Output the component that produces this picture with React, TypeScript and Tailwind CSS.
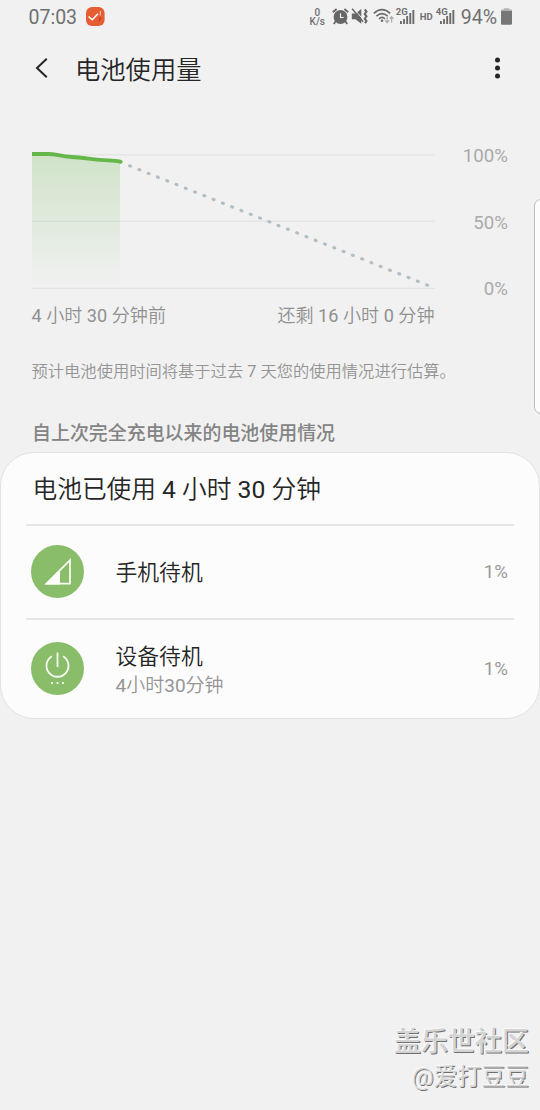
import type { ReactNode } from "react";

const SignalBars = () => (
  <svg width="15" height="14" viewBox="0 0 15 14" fill="#6b6b6b">
    <rect x="0" y="11" width="1.9" height="3" />
    <rect x="3.1" y="9" width="1.9" height="5" />
    <rect x="6.2" y="6" width="1.9" height="8" />
    <rect x="9.3" y="3" width="1.9" height="11" />
    <rect x="12.4" y="0" width="1.9" height="14" />
  </svg>
);

// digits look too thin next to the Chinese glyphs at weight 350
const Num = ({ children }: { children: ReactNode }) => <span className="font-normal">{children}</span>;

const StatusBar = () => (
  <header className="flex h-[34px] items-center pl-[28.5px] pr-7 text-[19.5px] text-[#707070]">
    <span className="pt-px">07:03</span>
    <svg className="ml-[9px] -mt-[2px]" width="19" height="19" viewBox="0 0 19 19">
      <rect width="18.6" height="19" rx="6" fill="#e65c33" />
      <path d="M2.6 9.6l3.7 3.2 5.7-6" fill="none" stroke="#fff" strokeWidth="1.5" />
      <path d="M14.3 4v4.5" stroke="#fbd0c0" strokeWidth="1" />
      <path d="M13 11q1.8-.8 1.6.6l-1 1v1.4" fill="none" stroke="#b52c10" strokeWidth=".9" />
    </svg>

    <div className="ml-auto flex items-center">
      <div className="flex w-[17px] flex-col items-center text-[10px] font-medium leading-[9.5px]">
        <span>0</span>
        <span>K/s</span>
      </div>
      <svg className="ml-1.5 -mt-[2px]" width="17" height="17" viewBox="0 0 17 17">
        <circle cx="8.5" cy="9" r="6.9" fill="#666" />
        <path d="M.8 4.2L4.6 1M16.2 4.2L12.4 1M3.7 13.3L1.8 16M13.3 13.3l1.9 2.7" stroke="#666" strokeWidth="1.8" />
        <path d="M8.5 5.2v4.3h3.2" fill="none" stroke="#f1f1f1" strokeWidth="1.2" />
      </svg>
      <svg className="ml-[2px] -mt-[2px]" width="17" height="17" viewBox="0 0 17 17">
        <path d="M.8 5.5h3.7L10.3 1v14.8l-5.8-4.5H.8z" fill="#666" />
        <path d="M3.2 1.2l9.5 10.8" stroke="#f1f1f1" strokeWidth="1" />
        <path d="M1.1.8l11 13" stroke="#666" strokeWidth="1.4" />
        <path d="M13.7 1.5l1.8 2-1.8 2.4 1.8 2.4-1.8 2.4 1.8 2.4-1.5 2" fill="none" stroke="#666" strokeWidth="2" />
      </svg>
      <svg className="ml-[5px] -mt-[3px]" width="22" height="18" viewBox="0 0 22 18">
        <g fill="none" stroke="#6b6b6b" strokeWidth="1.6">
          <path d="M.8 6.3q8.2-7.2 16.4 0" />
          <path d="M3.4 9.1q5.6-4.9 11.2 0" />
          <path d="M6 11.8q3-2.7 6 0" />
        </g>
        <circle cx="9" cy="13.8" r="1.3" fill="#6b6b6b" />
        <path d="M14.2 9.5v6M12.2 13.4l2 2.2 2-2.2M18.6 15.6v-6M16.7 11.8l1.9-2.2 1.9 2.2" fill="none" stroke="#aaa" strokeWidth="1.2" />
      </svg>
      <div className="relative ml-1.5 h-4 w-[15px]">
        <span className="absolute -left-[5px] -top-[2px] text-[9.5px] font-bold leading-[10px]">2G</span>
        <div className="absolute -left-px top-px">
          <SignalBars />
        </div>
      </div>
      <span className="ml-[4px] w-[16px] pb-px text-[9.5px] font-bold leading-none">HD</span>
      <div className="relative ml-1 h-4 w-[15px]">
        <span className="absolute -left-[4px] -top-[2px] text-[9.5px] font-bold leading-[10px]">4G</span>
        <div className="absolute left-0 top-px">
          <SignalBars />
        </div>
      </div>
      <span className="ml-[6px] pt-px">94%</span>
      <svg className="ml-1 -mt-[2px]" width="11" height="17" viewBox="0 0 11 17">
        <rect x="2.7" y="0" width="5.6" height="3" fill="#c4c4c4" />
        <rect x="0" y="1.8" width="11" height="15" rx="1.2" fill="#777" />
        <rect x="0" y="1.8" width="11" height="1.2" fill="#b5b5b5" />
      </svg>
    </div>
  </header>
);

const TitleBar = () => (
  <div className="flex h-[70px] items-center pl-[35px] pr-[38px] text-[#252525]">
    <svg className="-mt-[2px]" width="13" height="20" viewBox="0 0 13 20" fill="none" stroke="#252525" strokeWidth="2">
      <path d="M11.8.8L2 10l9.8 9.2" />
    </svg>
    <h1 className="ml-[27px] pt-[3px] text-[25.3px] font-[350] leading-none">电池使用量</h1>
    <svg className="ml-auto -mt-[2px]" width="9" height="22" viewBox="0 0 9 22" fill="#252525">
      <circle cx="4.5" cy="3" r="2.5" />
      <circle cx="4.5" cy="11" r="2.5" />
      <circle cx="4.5" cy="19" r="2.5" />
    </svg>
  </div>
);

const BatteryChart = () => (
  <section className="pl-[31.5px] pr-8 pt-[42px] font-[350]">
    <div className="flex justify-between">
      <svg width="404" height="146" viewBox="0 0 404 146">
        <defs>
          <linearGradient id="level" x1="0" y1="0" x2="0" y2="1">
            <stop offset="0" stopColor="#66b749" stopOpacity=".24" />
            <stop offset="1" stopColor="#66b749" stopOpacity="0" />
          </linearGradient>
        </defs>
        <path d="M0 8.8h403M0 75.4h403M0 142.4h403" stroke="#e3e3e3" strokeWidth="1.3" />
        <path d="M0 8h16q8 0 16 2l56 6v126H0z" fill="url(#level)" />
        <path d="M97.6 19.8L398.5 140.4" stroke="#b1bfc4" strokeWidth="3.1" strokeLinecap="round" strokeDasharray="1 9" />
        <path d="M0 8h16c8 0 12 2.3 24 3s24 3 36 3.4 10 1 13 1.4" fill="none" stroke="#66b749" strokeWidth="3.8" />
        <circle cx="88.7" cy="15.8" r="1.9" fill="#66b749" />
      </svg>
      <div className="flex h-[154px] flex-col justify-between text-right text-[18.7px] font-normal leading-[21px] text-[#aaa]">
        <span>100%</span>
        <span>50%</span>
        <span>0%</span>
      </div>
    </div>
    <div className="flex w-[403px] justify-between pt-px text-[18.1px] leading-[30px] text-[#909090]">
      <span>
        <Num>4 </Num>小时<Num> 30 </Num>分钟前
      </span>
      <span>
        还剩<Num> 16 </Num>小时<Num> 0 </Num>分钟
      </span>
    </div>
    <p className="mt-[29px] text-[16.3px] leading-6 text-[#959595]">
      预计电池使用时间将基于过去<Num> 7 </Num>天您的使用情况进行估算。
    </p>
  </section>
);

type UsageRowProps = {
  icon: ReactNode;
  title: string;
  detail?: ReactNode;
  percent: string;
};

const UsageRow = ({ icon, title, detail, percent }: UsageRowProps) => (
  <li className="flex items-center px-[5px]">
    <div className="-mt-[2px] flex size-[53px] items-center justify-center rounded-full bg-[#89bd69]">{icon}</div>
    <div className="ml-[31.5px] font-[350]">
      <h3 className="pt-px text-[21.8px] leading-[30px] text-[#252525]">{title}</h3>
      {detail && <p className="text-[19px] leading-[27px] text-[#959595]">{detail}</p>}
    </div>
    <span className="ml-auto pr-px text-[18.7px] text-[#999]">{percent}</span>
  </li>
);

const MobileIcon = () => (
  <svg width="53" height="53" viewBox="0 0 53 53">
    <path d="M15.5 38.7L39 15.2v23.5z" fill="none" stroke="#f7fbf4" strokeWidth="1.8" />
    <path d="M14 39.5L29 24.5v15z" fill="#fff" />
  </svg>
);

const PowerIcon = () => (
  <svg width="53" height="53" viewBox="0 0 53 53" fill="none" stroke="#f5faf2" strokeWidth="1.8">
    <path d="M21 14.2a11 11 0 1 0 11 0M26.5 10.5v14.5" />
    <path d="M20.2 41h1.8M25.6 41h1.8M31 41h1.8" />
  </svg>
);

const UsageCard = () => (
  <section className="h-[267px] rounded-[34px] border border-[#e2e2e2] bg-[#fcfcfc] px-[25px]">
    <h2 className="h-[71px] pl-[6.5px] pt-[3px] text-[24.7px] font-[350] leading-[68px] text-[#252525]">
      电池已使用<Num> 4 </Num>小时<Num> 30 </Num>分钟
    </h2>
    <ul>
      <div className="flex h-[94px] flex-col justify-center border-t-2 border-[#e5e5e5]">
        <UsageRow icon={<MobileIcon />} title="手机待机" percent="1%" />
      </div>
      <div className="flex h-[101px] flex-col justify-center border-t-2 border-[#e5e5e5]">
        <UsageRow
          icon={<PowerIcon />}
          title="设备待机"
          detail={
            <>
              <Num>4</Num>小时<Num>30</Num>分钟
            </>
          }
          percent="1%"
        />
      </div>
    </ul>
  </section>
);

const App = () => {
  return (
    <main className="relative flex h-[1110px] w-[540px] flex-col overflow-hidden bg-[#f1f1f1] font-[Roboto,'Noto_Sans_CJK_SC',sans-serif]">
      <StatusBar />
      <TitleBar />
      <BatteryChart />
      <h2 className="mb-[3px] mt-[35px] pl-8 text-[18.95px] font-medium leading-[30px] text-[#848484]">
        自上次完全充电以来的电池使用情况
      </h2>
      <UsageCard />

      {/* edge panel handle */}
      <div className="absolute -right-[8px] top-[199px] h-[215px] w-[14px] rounded-[7px] border border-[#bdbdbd] bg-[#fcfcfc]" />

      <footer className="mt-auto flex flex-col items-end pb-[16px] pr-[11px] text-[#d4d4d4] [text-shadow:-1px_-1px_0_#fafafa,1px_1px_0_#707070]">
        <span className="text-[27px] font-medium leading-[36px]">盖乐世社区</span>
        <span className="text-[23.8px] font-[350] leading-[34px]">@爱打豆豆</span>
      </footer>
    </main>
  );
};

export default App;
